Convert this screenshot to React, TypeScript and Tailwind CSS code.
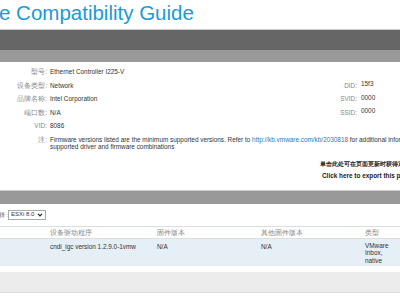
export default function App() {
  const row = "flex h-[13.6px] items-center"
  const lbl = "w-[50px] text-right text-[#888] text-[6.5px] pr-[3px] shrink-0"
  const rlbl = "w-[51px] text-right text-[#888] pr-[4px] shrink-0"
  return (
    <div className="w-[400px] h-[300px] overflow-hidden bg-white font-['Liberation_Sans',Arial,sans-serif] text-[6.4px] text-[#333]">
      <h1 className="ml-[-1px] h-[29px] text-[20.5px] leading-[26px] text-[#1a9ad6] whitespace-nowrap">e Compatibility Guide</h1>
      <div className="h-[21px] bg-[#666] border-t border-[#ccc]" />
      <div className="h-[12px] bg-[#999]" />

      <div className="relative mt-[3px] whitespace-nowrap">
        <div className="flex flex-col">
          <div className={row}><span className={lbl}>型号:</span><span>Ethernet Controller I225-V</span></div>
          <div className={row}><span className={lbl}>设备类型:</span><span>Network</span></div>
          <div className={row}><span className={lbl}>品牌名称:</span><span>Intel Corporation</span></div>
          <div className={row}><span className={lbl}>端口数:</span><span>N/A</span></div>
          <div className={row}><span className={lbl}>VID:</span><span>8086</span></div>
          <div className="flex pt-[3px] leading-[7px]">
            <span className={lbl}>注:</span>
            <span>
              Firmware versions listed are the minimum supported versions. Refer to{" "}
              <span className="text-[#1a80c0]">http://kb.vmware.com/kb/2030818</span> for additional information on
              <br />
              supported driver and firmware combinations
            </span>
          </div>
        </div>
        <div className="absolute left-[310px] top-[13.6px] flex flex-col">
          <div className={row}><span className={rlbl}>DID:</span><span className="-mt-[3px]">15f3</span></div>
          <div className={row}><span className={rlbl}>SVID:</span><span className="-mt-[3px]">0000</span></div>
          <div className={row}><span className={rlbl}>SSID:</span><span className="-mt-[3px]">0000</span></div>
        </div>
      </div>

      <div className="flex flex-col pl-[320px] mt-[10px] gap-[4px] leading-[8px] whitespace-nowrap font-bold text-[#222]">
        <span className="text-[6.1px]">单击此处可在页面更新时获得通知</span>
        <span className="pl-[2px]">Click here to export this page</span>
      </div>

      <div className="h-[14px] mt-[10px] bg-[#999] border-t border-[#ccc]" />

      <div className="flex items-center h-[23px] border-b border-[#ddd] text-[#555]">
        <span className="-ml-[1px] w-[9px]">择：</span>
        <div className="flex items-center gap-[3px] h-[10px] px-[2px] border border-[#aaa] text-[6px] text-[#333]">
          ESXi 8.0
          <svg width="6" height="4" viewBox="0 0 6 4"><path d="M1 0.8l2 2 2-2" stroke="#222" strokeWidth="1.2" fill="none" /></svg>
        </div>
      </div>

      <div className="flex h-[12px] items-center text-[#888] text-[6.5px] border-b border-[#ddd] whitespace-nowrap">
        <span className="w-[50px]" />
        <span className="w-[107px]">设备驱动程序</span>
        <span className="w-[104px]">固件版本</span>
        <span className="w-[104px]">其他固件版本</span>
        <span>类型</span>
      </div>
      <div className="flex h-[27px] pt-[3px] bg-[#e6eef6] whitespace-nowrap">
        <span className="w-[50px]" />
        <span className="w-[107px]">cndi_igc version 1.2.9.0-1vmw</span>
        <span className="w-[104px]">N/A</span>
        <span className="w-[104px]">N/A</span>
        <span className="leading-[7.5px]">VMware<br />Inbox,<br />native</span>
      </div>
      <div className="h-[21px] mt-[6px] bg-[#ececec] border-b border-[#ddd]" />
    </div>
  )
}
